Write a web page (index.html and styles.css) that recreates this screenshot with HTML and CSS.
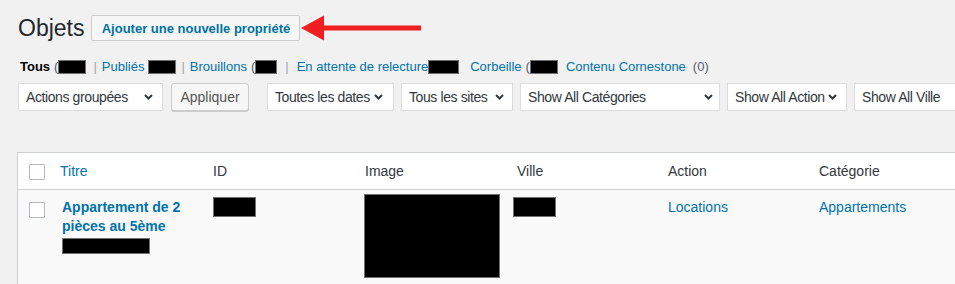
FILE: index.html
```html
<!DOCTYPE html>
<html lang="fr">
<head>
<meta charset="utf-8">
<title>Objets</title>
<link rel="stylesheet" href="styles.css">
</head>
<body>
<div class="wrap">
  <div class="title-row">
    <h1 class="page-title">Objets</h1>
    <a class="title-action" href="#">Ajouter une nouvelle propriété</a>
    <svg class="arrow" width="122" height="26" viewBox="0 0 122 26" aria-hidden="true">
      <rect x="22" y="10.5" width="98" height="5" fill="#f01f1f"/>
      <polygon points="0,13 23,0.5 23,25.5" fill="#f01f1f"/>
    </svg>
  </div>

  <ul class="views">
    <li class="view current">Tous <span class="count">(</span><span class="redact rd-tous"></span></li>
    <li class="sep sep-1">|</li>
    <li class="view v-pub"><a href="#">Publiés</a><span class="redact rd-pub"></span></li>
    <li class="sep sep-2">|</li>
    <li class="view v-brou"><a href="#">Brouillons</a> <span class="count">(</span><span class="redact rd-brou"></span></li>
    <li class="sep sep-3">|</li>
    <li class="view v-att"><a href="#">En attente de relecture</a><span class="redact rd-att"></span></li>
    <li class="view v-corb"><a href="#">Corbeille</a> <span class="count">(</span><span class="redact rd-corb"></span></li>
    <li class="view v-corn"><a href="#">Contenu Cornestone</a> <span class="count c-zero">(0)</span></li>
  </ul>

  <div class="tablenav">
    <div class="select w-bulk"><span>Actions groupées</span><svg class="chev" width="9" height="6" viewBox="0 0 9 6"><path d="M1 1l3.5 3.5L8 1"/></svg></div>
    <button class="btn-apply" type="button">Appliquer</button>
    <div class="select w-dates gap-lg"><span>Toutes les dates</span><svg class="chev" width="9" height="6" viewBox="0 0 9 6"><path d="M1 1l3.5 3.5L8 1"/></svg></div>
    <div class="select w-sites gap-sm"><span>Tous les sites</span><svg class="chev" width="9" height="6" viewBox="0 0 9 6"><path d="M1 1l3.5 3.5L8 1"/></svg></div>
    <div class="select w-cat gap-sm"><span>Show All Catégories</span><svg class="chev" width="9" height="6" viewBox="0 0 9 6"><path d="M1 1l3.5 3.5L8 1"/></svg></div>
    <div class="select w-action gap-sm"><span>Show All Action</span><svg class="chev" width="9" height="6" viewBox="0 0 9 6"><path d="M1 1l3.5 3.5L8 1"/></svg></div>
    <div class="select w-ville gap-sm"><span>Show All Ville</span><svg class="chev" width="9" height="6" viewBox="0 0 9 6"><path d="M1 1l3.5 3.5L8 1"/></svg></div>
  </div>

  <table class="list">
    <colgroup>
      <col class="col-cb"><col class="col-title"><col class="col-std"><col class="col-std"><col class="col-ville"><col class="col-ville"><col class="col-last">
    </colgroup>
    <thead>
      <tr>
        <td class="check"><span class="cb"></span></td>
        <th class="th-title"><a href="#">Titre</a></th>
        <th>ID</th>
        <th>Image</th>
        <th>Ville</th>
        <th>Action</th>
        <th>Catégorie</th>
      </tr>
    </thead>
    <tbody>
      <tr>
        <td class="check row-check"><span class="cb"></span></td>
        <td class="td-title"><a class="row-title" href="#">Appartement de 2 pièces au 5ème</a><span class="redact rd-slug"></span></td>
        <td><span class="redact rd-id"></span></td>
        <td><span class="redact rd-img"></span></td>
        <td><span class="redact rd-ville"></span></td>
        <td><a href="#">Locations</a></td>
        <td><a href="#">Appartements</a></td>
      </tr>
    </tbody>
  </table>
</div>
</body>
</html>
```
FILE: styles.css
```css
html, body {
  margin: 0;
  overflow: hidden;
}
body {
  width: 955px;
  height: 284px;
  background: #f1f1f1;
  font-family: "Liberation Sans", Arial, sans-serif;
  color: #32373c;
}
a {
  color: #0073aa;
  text-decoration: none;
}
.wrap {
  padding: 13px 0 0 18px;
}

/* title */
.title-row {
  display: flex;
  align-items: center;
  height: 30px;
}
.page-title {
  margin: 0;
  font-size: 23px;
  font-weight: 400;
  line-height: 30px;
  color: #23282d;
}
.title-action {
  margin-left: 7px;
  box-sizing: border-box;
  width: 209px;
  height: 26px;
  display: flex;
  align-items: center;
  justify-content: center;
  border: 1px solid #ccc;
  border-radius: 2px;
  background: #f7f7f7;
  color: #0071a1;
  font-size: 13px;
  font-weight: 700;
}
.arrow {
  margin-left: 1px;
  flex: none;
}

/* views */
.views {
  list-style: none;
  margin: 14px 0 0;
  padding: 0;
  height: 20px;
  display: flex;
  align-items: center;
  font-size: 13px;
  line-height: 20px;
  white-space: nowrap;
  color: #555d66;
}
.view, .sep {
  display: flex;
  align-items: center;
}
.view.current {
  margin-left: 2px;
  color: #000;
  font-weight: 700;
}
.count {
  font-weight: 400;
  color: #555d66;
}
.view .count {
  margin-left: 4px;
}
.sep { color: #a0a5aa; }
.sep-1 { margin-left: 7px; }
.sep-2 { margin-left: 5px; }
.sep-3 { margin-left: 8px; }
.v-pub { margin-left: 5px; }
.v-brou { margin-left: 5px; }
.v-att { margin-left: 8px; }
.v-corb { margin-left: 11px; }
.v-corn { margin-left: 8px; }
.c-zero { margin-left: 7px !important; }

.redact {
  display: inline-block;
  background: #000;
  box-sizing: border-box;
  border: 1px solid #6f6f6f;
}
.views .redact {
  height: 14px;
}
.rd-tous { width: 28px; }
.rd-pub { width: 28px; margin-left: 4px; }
.rd-brou { width: 22px; }
.rd-att { width: 31px; }
.rd-corb { width: 28px; }

/* tablenav */
.tablenav {
  margin-top: 6px;
  display: flex;
  height: 28px;
}
.select {
  flex: none;
  box-sizing: border-box;
  height: 28px;
  display: flex;
  align-items: center;
  justify-content: space-between;
  padding: 0 8px 0 7px;
  border: 1px solid #dcdcde;
  background: #fff;
  font-size: 14px;
  letter-spacing: -0.4px;
  color: #32373c;
  white-space: nowrap;
  overflow: hidden;
}
.chev {
  flex: none;
  fill: none;
  stroke: #32373c;
  stroke-width: 2;
}
.w-bulk { width: 145px; padding-right: 9px; }
.w-dates { width: 127px; padding-right: 10px; }
.w-sites { width: 112px; }
.w-cat { width: 200px; padding-right: 6px; }
.w-action { width: 120px; padding-right: 9px; }
.w-ville { width: 130px; }
.gap-lg { margin-left: 18px; }
.gap-sm { margin-left: 7px; }
.btn-apply {
  flex: none;
  margin-left: 8px;
  box-sizing: border-box;
  width: 78px;
  height: 28px;
  padding: 0;
  border: 1px solid #ccc;
  border-radius: 3px;
  background: #f7f7f7;
  box-shadow: 0 1px 0 #ccc;
  font-family: inherit;
  font-size: 14px;
  color: #555;
}

/* table */
.list {
  margin: 41px 0 0 -1px;
  width: 1010px;
  table-layout: fixed;
  border-spacing: 0;
  border: 1px solid #ccd0d4;
  background: #fff;
  box-shadow: 0 1px 1px rgba(0, 0, 0, .04);
  font-size: 14px;
}
.col-cb { width: 32px; }
.col-title { width: 153px; }
.col-std { width: 152px; }
.col-ville { width: 151px; }
.col-last { width: 220px; }
.list th, .list td {
  padding: 8px 10px;
  text-align: left;
  vertical-align: top;
}
.list thead th, .list thead td {
  font-weight: 400;
  line-height: 20px;
  color: #32373c;
  border-bottom: 1px solid #ccd0d4;
}
.list tbody td {
  background: #f9f9f9;
  line-height: 19px;
  height: 93px;
}
.list .check {
  padding: 11px 0 0 11px;
}
.list .row-check {
  padding-top: 12px;
}
.cb {
  display: block;
  box-sizing: border-box;
  width: 16px;
  height: 16px;
  border: 1px solid #b4b9be;
  border-radius: 1px;
  background: #fff;
}
.list .td-title {
  padding-left: 12px;
  padding-right: 8px;
}
.row-title {
  display: block;
  font-weight: 700;
}
.rd-slug {
  display: block;
  width: 88px;
  height: 16px;
  margin-top: 2px;
}
.rd-id {
  display: block;
  width: 43px;
  height: 20px;
  margin-top: -1px;
}
.rd-img {
  display: block;
  width: 136px;
  height: 84px;
  margin: -4px 0 0 -1px;
}
.rd-ville {
  display: block;
  width: 43px;
  height: 20px;
  margin: -1px 0 0 -4px;
}
```
